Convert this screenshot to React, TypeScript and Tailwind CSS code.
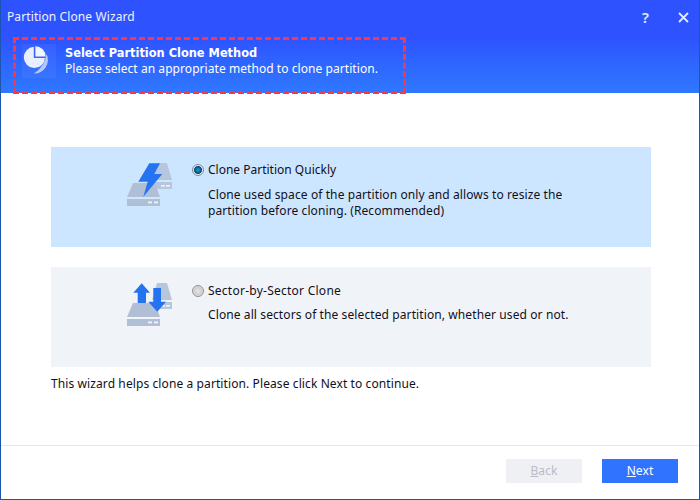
const uiFont = { fontFamily: '"Noto Sans", Tahoma, sans-serif' };

function PieIcon() {
  return (
    <svg width="34" height="34" viewBox="0 0 34 34" className="shrink-0">
      <rect width="34" height="34" fill="#ffffff" opacity="0.05" />
      <path d="M11.8 2.8 A10.6 10.6 0 1 0 23 14 H11.8 Z" fill="#e9effc" />
      <path d="M13.4 2.2 A10.2 10.2 0 0 1 23.6 12.4 H13.4 Z" fill="#f1f5fd" />
      <path d="M24.5 10 A13.5 13.5 0 0 1 12 29.5 A28 28 0 0 0 24.5 10 Z" fill="#b4c9f8" />
    </svg>
  );
}

function Drives() {
  return (
    <>
      <path d="M31 3 H41 L46 20 H26 Z" fill="#b7c6dc" />
      <path d="M26 22 H46 V29 H26 Z" fill="#b7c6dc" />
      <rect x="35" y="25" width="4" height="1.6" fill="#eef3fa" />
      <rect x="40" y="25" width="4" height="1.6" fill="#eef3fa" />
      <path d="M7 23 H29 L34 37 H1 Z" fill="#b0bfd6" />
      <path d="M1 39 H34 V46 H1 Z" fill="#b0bfd6" />
      <rect x="22" y="41.5" width="4" height="1.8" fill="#eef3fa" />
      <rect x="28" y="41.5" width="4" height="1.8" fill="#eef3fa" />
    </>
  );
}

function BoltDrive() {
  return (
    <svg width="48" height="48" viewBox="0 0 48 48" className="shrink-0">
      <Drives />
      <path d="M23.3 3.3 H34 L28.3 14 H36.3 L17.3 36.7 L21.7 21.7 H12.3 Z" fill="#2473f0" />
    </svg>
  );
}

function ArrowsDrive() {
  return (
    <svg width="48" height="48" viewBox="0 0 48 48" className="shrink-0">
      <Drives />
      <path d="M15.7 3.3 L24 12.7 H20 V23 H11.7 V12.7 H7.3 Z" fill="#2473f0" />
      <path d="M27.3 8 H35 V21.7 H40 L31.3 31.7 L22.3 21.7 H27.3 Z" fill="#2473f0" />
    </svg>
  );
}

function Radio({ checked }: { checked?: boolean }) {
  return (
    <span
      className={
        checked
          ? "block h-[12px] w-[12px] shrink-0 rounded-full border border-[#7d8a99] bg-[radial-gradient(circle,#2a9ad8_0%,#0f6ea8_30%,#0a4a78_52%,#e8eef5_62%,#f4f6f8_100%)]"
          : "block h-[12px] w-[12px] shrink-0 rounded-full border border-[#8f8f8f] bg-[radial-gradient(circle,#e6e6e6_0%,#cfcfcf_50%,#f5f5f5_100%)]"
      }
    />
  );
}

function MethodCard({
  icon,
  title,
  lines,
  selected,
  titleTop,
  titleClass,
}: {
  icon: React.ReactNode;
  title: string;
  lines: string[];
  selected?: boolean;
  titleTop: string;
  titleClass: string;
}) {
  return (
    <div className={`flex h-[100px] pl-[75px] ${selected ? "bg-[#cde6ff]" : "bg-[#f0f3f8]"}`}>
      <div className="mt-[13px] w-[66px]">{icon}</div>
      <div className={titleTop}>
        <div className="flex h-[16px] items-center gap-[4px]">
          <Radio checked={selected} />
          <span className={`text-[12px] leading-[16px] text-[#10101c] ${titleClass}`}>{title}</span>
        </div>
        <div className={`pl-[16px] text-[12px] leading-[16px] text-[#10101c] ${selected ? "mt-[9px]" : "mt-[8px]"}`}>
          {lines.map((line) => (
            <div key={line}>{line}</div>
          ))}
        </div>
      </div>
    </div>
  );
}

export default function App() {
  return (
    <div
      style={uiFont}
      className="relative flex h-[500px] w-[700px] flex-col overflow-hidden border border-t-0 border-[#1a56b0] bg-white tracking-[0.1px]"
    >
      <div className="h-[93px] shrink-0 bg-gradient-to-b from-[#2f52ff] from-40% to-[#2f78ff] pl-[6px] pr-[10px] text-white">
        <div className="flex h-[34px] items-center justify-between">
          <span className="text-[12px] text-[#eef2ff]">Partition Clone Wizard</span>
          <div className="flex items-center gap-[29px]">
            <span className="text-[15px] font-semibold text-[#e4eaff]">?</span>
            <svg width="11" height="11" viewBox="0 0 11 11">
              <path d="M1 1 L10 10 M10 1 L1 10" stroke="#e4eaff" strokeWidth="1.8" />
            </svg>
          </div>
        </div>
        <div className="flex items-center gap-[9px] pl-[15px] pt-[10px]">
          <PieIcon />
          <div className="text-[12px] leading-[16px]">
            <div className="text-[11.4px] font-bold tracking-normal [font-family:'DejaVu_Sans',sans-serif]">
              Select Partition Clone Method
            </div>
            <div className="tracking-[0.06px]">Please select an appropriate method to clone partition.</div>
          </div>
        </div>
      </div>

      {/* annotation drawn over the header */}
      <div className="absolute left-[12px] top-[37px] h-[57px] w-[393px] border-[3px] border-dashed border-[#f23a4c]" />

      <div className="flex flex-1 flex-col px-[50px] pt-[54px]">
        <div className="w-[600px]">
          <MethodCard
            selected
            icon={<BoltDrive />}
            title="Clone Partition Quickly"
            titleTop="pt-[15px]"
            titleClass="tracking-normal"
            lines={[
              "Clone used space of the partition only and allows to resize the",
              "partition before cloning. (Recommended)",
            ]}
          />
        </div>
        <div className="mt-[20px] w-[600px]">
          <MethodCard
            icon={<ArrowsDrive />}
            title="Sector-by-Sector Clone"
            titleTop="pt-[16px]"
            titleClass="tracking-[0.25px]"
            lines={["Clone all sectors of the selected partition, whether used or not."]}
          />
        </div>
        <p className="mt-[9px] text-[12px] leading-[16px] text-[#10101c]">
          This wizard helps clone a partition. Please click Next to continue.
        </p>
      </div>

      <div className="flex h-[54px] shrink-0 items-start justify-end gap-[20px] border-t border-[#e6e8f0] pr-[21px] pt-[13px]">
        <button className="h-[24px] w-[76px] bg-[#eff0f4] text-[12px] text-[#b9bcc6]">
          <span className="underline">B</span>ack
        </button>
        <button className="h-[24px] w-[76px] bg-[#2f73ff] text-[12px] text-white">
          <span className="underline">N</span>ext
        </button>
      </div>
    </div>
  );
}
